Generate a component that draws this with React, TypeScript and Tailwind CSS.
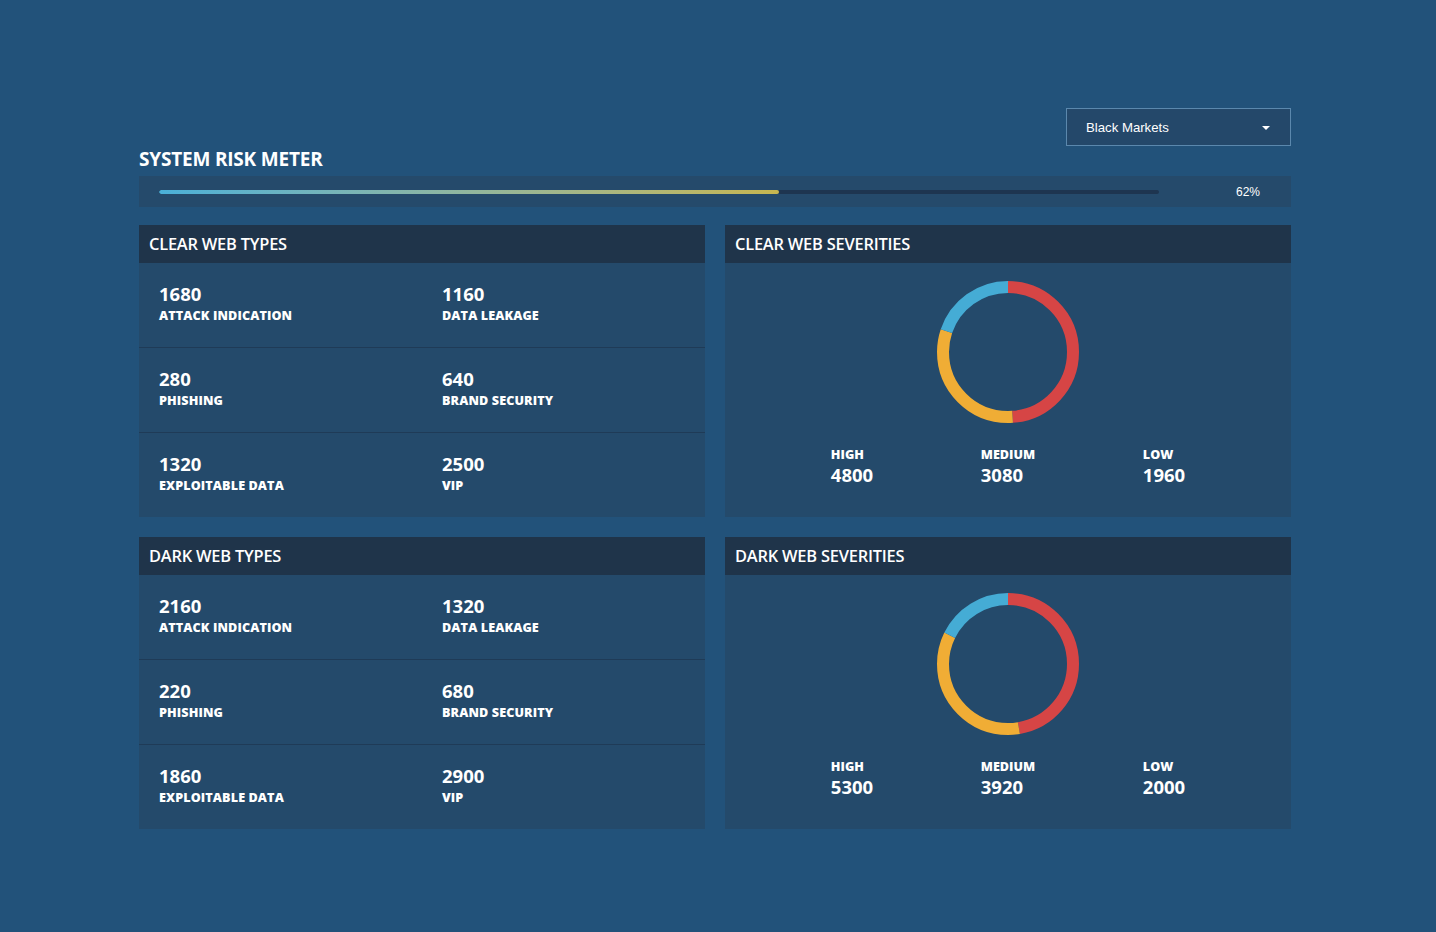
import React from 'react'

type Stat = { value: number; label: string }

const clearTypes: Stat[] = [
  { value: 1680, label: 'ATTACK INDICATION' },
  { value: 1160, label: 'DATA LEAKAGE' },
  { value: 280, label: 'PHISHING' },
  { value: 640, label: 'BRAND SECURITY' },
  { value: 1320, label: 'EXPLOITABLE DATA' },
  { value: 2500, label: 'VIP' },
]

const darkTypes: Stat[] = [
  { value: 2160, label: 'ATTACK INDICATION' },
  { value: 1320, label: 'DATA LEAKAGE' },
  { value: 220, label: 'PHISHING' },
  { value: 680, label: 'BRAND SECURITY' },
  { value: 1860, label: 'EXPLOITABLE DATA' },
  { value: 2900, label: 'VIP' },
]

const font = { fontFamily: '"Open Sans", "Noto Sans", sans-serif' }

function CardHeader({ title }: { title: string }) {
  return (
    <div className="h-[38px] bg-[#1f344a] flex items-center px-[10px]">
      <h2 className="text-[16.4px] font-semibold text-white tracking-[-0.2px]">{title}</h2>
    </div>
  )
}

function TypesCard({ title, stats }: { title: string; stats: Stat[] }) {
  const rows = [stats.slice(0, 2), stats.slice(2, 4), stats.slice(4, 6)]
  return (
    <div className="bg-[#244a6b] h-[292px]">
      <CardHeader title={title} />
      {rows.map((row, i) => (
        <div
          key={i}
          className={`grid grid-cols-2 items-center pb-[3px] ${i < 2 ? 'h-[85px] border-b border-[#1f3b57]' : 'h-[84px]'}`}
        >
          {row.map((s) => (
            <div key={s.label} className="px-5">
              <div className="text-[18.5px] leading-[22px] font-bold text-white">{s.value}</div>
              <div className="mt-[3px] text-[12.6px] leading-[16px] font-extrabold text-white tracking-[0.1px]">
                {s.label}
              </div>
            </div>
          ))}
        </div>
      ))}
    </div>
  )
}

function Donut({ high, medium, low }: { high: number; medium: number; low: number }) {
  const total = high + medium + low
  const r = 65
  const c = 2 * Math.PI * r
  const segs = [
    { v: high, color: '#d64545' },
    { v: medium, color: '#f0ad35' },
    { v: low, color: '#45acd5' },
  ]
  let offset = 0
  return (
    <svg width="142" height="142" viewBox="0 0 142 142">
      <g transform="rotate(-90 71 71)">
        {segs.map((s, i) => {
          const len = (s.v / total) * c
          const el = (
            <circle
              key={i}
              cx="71"
              cy="71"
              r={r}
              fill="none"
              stroke={s.color}
              strokeWidth="12"
              strokeDasharray={`${len} ${c - len}`}
              strokeDashoffset={-offset}
            />
          )
          offset += len
          return el
        })}
      </g>
    </svg>
  )
}

function SeverityCard({ title, high, medium, low }: { title: string; high: number; medium: number; low: number }) {
  const items = [
    { label: 'HIGH', value: high },
    { label: 'MEDIUM', value: medium },
    { label: 'LOW', value: low },
  ]
  return (
    <div className="bg-[#244a6b] h-[292px] flex flex-col">
      <CardHeader title={title} />
      <div className="flex justify-center pt-[18px]">
        <Donut high={high} medium={medium} low={low} />
      </div>
      <div className="grid grid-cols-3 w-[468px] mx-auto mt-[24px]">
        {items.map((it) => (
          <div key={it.label} className="flex justify-center">
            <div>
              <div className="text-[12.6px] leading-[16px] font-extrabold text-white">{it.label}</div>
              <div className="mt-[1px] text-[18.5px] leading-[22px] font-bold text-white">{it.value}</div>
            </div>
          </div>
        ))}
      </div>
    </div>
  )
}

export default function App() {
  const risk = 62
  return (
    <div className="min-h-screen bg-[#22527a]" style={font}>
      <div className="w-[1152px] ml-[139px] pt-[108px]">
        <div className="flex justify-end">
          <button
            className="w-[225px] h-[38px] bg-[#24486a] border border-[#5b88ad] flex items-center justify-between pl-[19px] pr-[20px] pt-[1px] text-white text-[13.2px]"
            style={{ fontFamily: '"Liberation Sans", Arial, sans-serif' }}
          >
            <span>Black Markets</span>
            <svg width="8" height="4" viewBox="0 0 8 4">
              <path d="M0 0 L8 0 L4 4 Z" fill="white" />
            </svg>
          </button>
        </div>
        <h1 className="text-[19px] font-bold text-white leading-[24px] mt-[1px] tracking-[-0.2px]">SYSTEM RISK METER</h1>
        <div className="h-[31px] bg-[#254a6b] mt-[5px] flex items-center pl-5 pr-[31px]">
          <div className="w-[1000px] h-[4px] rounded-full bg-[#1e3550] overflow-hidden">
            <div
              className="h-full rounded-full bg-gradient-to-r from-[#4ab0d8] to-[#c7b64f]"
              style={{ width: `${risk}%` }}
            />
          </div>
          <span
            className="ml-auto text-white text-[12px]"
            style={{ fontFamily: '"Liberation Sans", Arial, sans-serif' }}
          >
            {risk}%
          </span>
        </div>
        <div className="grid grid-cols-2 gap-5 mt-[18px]">
          <TypesCard title="CLEAR WEB TYPES" stats={clearTypes} />
          <SeverityCard title="CLEAR WEB SEVERITIES" high={4800} medium={3080} low={1960} />
          <TypesCard title="DARK WEB TYPES" stats={darkTypes} />
          <SeverityCard title="DARK WEB SEVERITIES" high={5300} medium={3920} low={2000} />
        </div>
      </div>
    </div>
  )
}
